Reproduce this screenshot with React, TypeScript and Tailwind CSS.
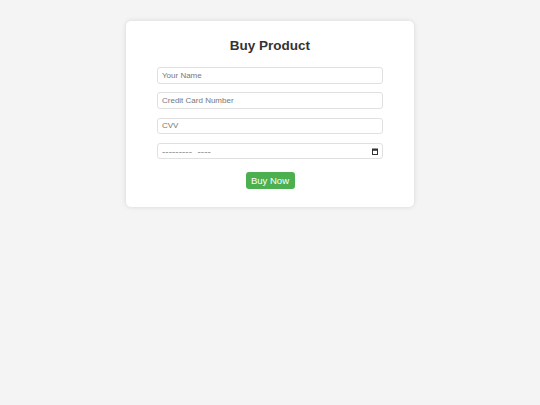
import React from "react";

const inputCls =
  "block h-[16.5px] w-full rounded-[3px] border border-[#e0e0e0] px-[4px] text-[8px] text-[#333] placeholder-[#777] outline-none";

export default function App() {
  return (
    <div className="min-h-[405px] w-full bg-[#f4f4f4] pt-[21px] font-['Liberation_Sans',Arial,sans-serif]">
      <div className="mx-auto flex w-[288px] flex-col items-center rounded-[5px] bg-white px-[31px] pt-[16px] pb-[18px] shadow-[0_0_5px_rgba(0,0,0,0.12)]">
        <h2 className="h-[17px] text-[13.5px] font-bold leading-[17px] text-[#333]">Buy Product</h2>
        <form className="mt-[13px] flex w-full flex-col gap-[8.8px]" onSubmit={(e) => e.preventDefault()}>
          <input type="text" placeholder="Your Name" className={inputCls} />
          <input type="text" placeholder="Credit Card Number" className={inputCls} />
          <input type="text" placeholder="CVV" className={inputCls} />
          <div className="relative h-[16.5px]">
            <input
              type="text"
              placeholder={"---------\u00a0\u00a0----"}
              className="block h-[16.5px] w-full rounded-[3px] border border-[#e0e0e0] px-[4px] text-[10px] text-[#333] placeholder-[#999] outline-none"
            />
            <svg
              className="pointer-events-none absolute right-[5px] top-[5px] h-[7px] w-[6px]"
              viewBox="0 0 6 7"
            >
              <rect x="0.5" y="1" width="5" height="5.5" fill="none" stroke="#333" strokeWidth="1" />
              <rect x="0.5" y="1" width="5" height="1.8" fill="#333" />
            </svg>
          </div>
          <button
            type="submit"
            className="mx-auto mt-[4px] h-[17px] w-[49px] rounded-[3px] bg-[#4caf50] text-[9.5px] leading-[17px] text-white"
          >
            Buy Now
          </button>
        </form>
      </div>
    </div>
  );
}
